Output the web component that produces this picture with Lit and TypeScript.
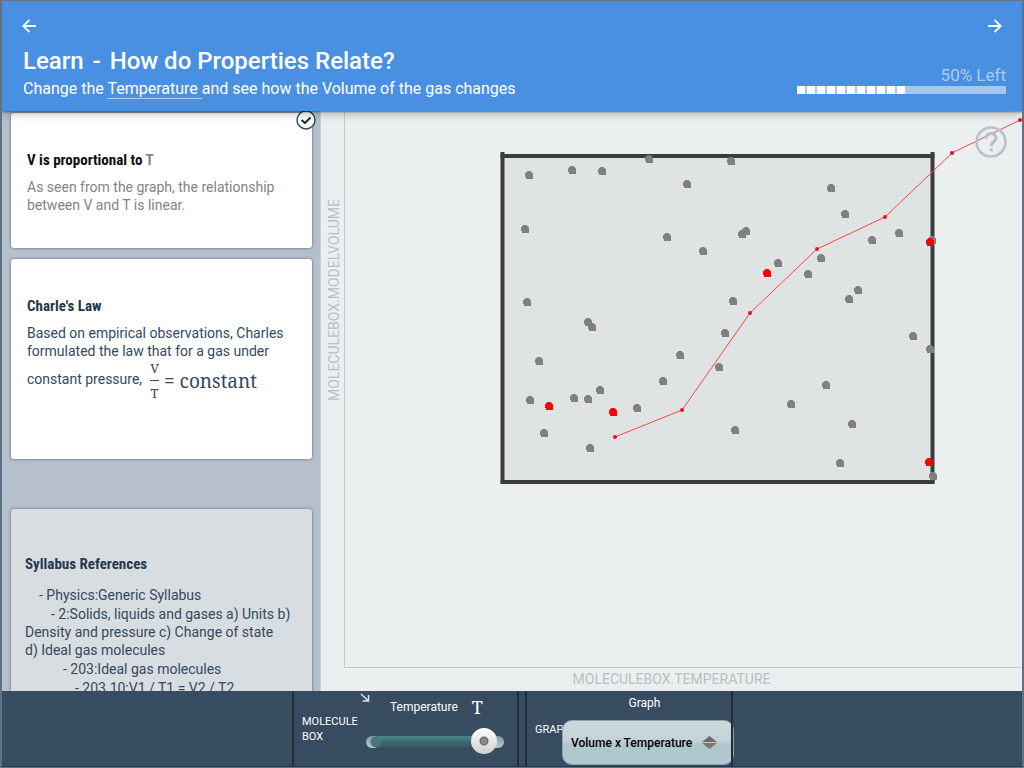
import { LitElement, html, css, svg } from "lit";
import { customElement, state } from "lit/decorators.js";

const MOLECULES: Array<[number, number]> = [
  [529, 175], [572, 170], [602, 171], [649, 159], [731, 161], [687, 184],
  [525, 229], [667, 237], [703, 251], [742, 234], [746, 231], [527, 302],
  [733, 301], [831, 188], [845, 214], [872, 240], [899, 233], [778, 263],
  [821, 258], [808, 274], [858, 290], [849, 299], [932, 240], [588, 322],
  [592, 327], [539, 361], [530, 400], [574, 398], [588, 399], [600, 390],
  [663, 381], [680, 355], [725, 333], [719, 367], [637, 408], [735, 430],
  [544, 433], [590, 448], [913, 336], [930, 349], [826, 385], [791, 404],
  [852, 424], [840, 463], [933, 476],
];

const TRACERS: Array<[number, number]> = [
  [930, 242], [767, 273], [549, 406], [613, 412], [929, 462],
];

const SERIES: Array<[number, number]> = [
  [615, 437], [682, 410], [750, 313], [817, 249], [885, 217], [952, 153], [1020, 120],
];

@customElement("app-header")
class AppHeader extends LitElement {
  static styles = css`
    :host {
      display: block;
      position: relative;
      z-index: 2;
      background: #4990e2;
      color: #fff;
      box-shadow: 0 1px 2px rgba(0, 0, 0, 0.45), 0 4px 8px rgba(0, 0, 0, 0.2);
    }
    .nav {
      display: flex;
      justify-content: space-between;
      padding: 15px 17px 0;
    }
    .arrow {
      display: block;
      width: 20px;
      height: 20px;
      padding: 0;
      border: 0;
      background: none;
      color: inherit;
    }
    .arrow svg {
      display: block;
    }
    .row {
      display: flex;
      justify-content: space-between;
      align-items: flex-end;
      padding: 10px 16px 11px 21px;
    }
    h1 {
      margin: 0;
      font-size: 24px;
      line-height: 30px;
      font-weight: 500;
    }
    .dash {
      margin: 0 3px;
    }
    p {
      margin: 0;
      font-size: 16px;
      line-height: 22px;
      padding-top: 2px;
    }
    .term {
      color: inherit;
      text-decoration: none;
      border-bottom: 1px solid #b6d2f3;
      white-space: pre;
    }
    .progress {
      width: 209px;
      padding-bottom: 6px;
      color: #a9cbf2;
    }
    .left {
      display: block;
      text-align: right;
      font-size: 17px;
      line-height: 22px;
    }
    .track {
      height: 8px;
      background: #a4c7f0;
    }
    .done {
      height: 8px;
      background: repeating-linear-gradient(90deg, #fff 0 8px, #a4c7f0 8px 10px);
    }
  `;
  render() {
    return html`
      <div class="nav">
        <button class="arrow" aria-label="Previous">
          <svg width="20" height="20" viewBox="0 0 20 20" fill="none" stroke="#fff" stroke-width="1.800">
            <path d="M17 10H4.500M10.500 3.800L4.300 10L10.500 16.200" />
          </svg>
        </button>
        <button class="arrow" aria-label="Next">
          <svg width="20" height="20" viewBox="0 0 20 20" fill="none" stroke="#fff" stroke-width="1.800">
            <path d="M3 10H15.500M9.500 3.800L15.700 10L9.500 16.200" />
          </svg>
        </button>
      </div>
      <div class="row">
        <div>
          <h1>Learn <span class="dash">-</span> How do Properties Relate?</h1>
          <p>Change the <a class="term" href="#temperature">Temperature </a>and see how the Volume of the gas changes</p>
        </div>
        <div class="progress">
          <span class="left">50% Left</span>
          <div class="track"><div class="done" style="width:52%"></div></div>
        </div>
      </div>
    `;
  }
}

@customElement("note-list")
class NoteList extends LitElement {
  static styles = css`
    :host {
      display: flex;
      flex-direction: column;
      gap: 11px;
      min-height: 0;
      overflow: hidden;
      padding: 2px 8px 0 9px;
      box-sizing: border-box;
      background: #b6c0cb;
      border-right: 1px solid #c9d1d8;
      color: #34495e;
    }
    .card {
      position: relative;
      flex: none;
      box-sizing: border-box;
      border-radius: 3px;
      padding: 37px 16px 34px;
      background: #fff;
      box-shadow: 0 0 3px rgba(40, 55, 75, 0.7);
    }
    .law {
      padding-bottom: 58px;
    }
    .refs {
      margin-top: 39px;
      padding: 45px 14px 30px;
      background: #d8dde1;
    }
    h2 {
      margin: 0;
      font-family: "Roboto Condensed", Roboto, sans-serif;
      font-size: 15px;
      line-height: 20px;
      font-weight: 700;
      color: #24384e;
    }
    .seen h2 {
      color: #0b0f18;
    }
    .seen .sym,
    .seen p {
      color: #7f8389;
    }
    p {
      margin: 0;
      font-size: 14px;
      line-height: 18px;
    }
    .seen p,
    .law p {
      padding-top: 8px;
    }
    .formula {
      display: inline-flex;
      align-items: center;
      gap: 5px;
      margin-left: 8px;
      vertical-align: middle;
      font-family: "Noto Serif", "DejaVu Serif", serif;
      font-size: 19px;
    }
    .frac {
      display: flex;
      flex-direction: column;
      text-align: center;
      font-size: 13px;
      line-height: 16px;
    }
    .frac span + span {
      border-top: 1px solid #34495e;
      padding-top: 4px;
    }
    .frac span:first-child {
      padding-bottom: 4px;
    }
    .check {
      position: absolute;
      top: -3px;
      right: -4px;
    }
    ul {
      list-style: none;
      margin: 0;
      padding: 12px 0 0;
      font-size: 14px;
      line-height: 18px;
    }
    li {
      padding-bottom: 1px;
    }
    .l1 { text-indent: 14px; }
    .l2 { text-indent: 26px; }
    .l3 { text-indent: 38px; }
    .l4 { text-indent: 50px; }
  `;
  render() {
    return html`
      <article class="card seen">
        <h2>V is proportional to <span class="sym">T</span></h2>
        <p>As seen from the graph, the relationship between V and T is linear.</p>
        <svg class="check" width="20" height="20" viewBox="0 0 20 20" aria-hidden="true">
          <circle cx="10" cy="10" r="9" fill="#fff" stroke="#2b4a50" stroke-width="1.4" />
          <path d="M5.5 10L9 13L14.5 7.5" fill="none" stroke="#1d3a40" stroke-width="2.2" />
        </svg>
      </article>
      <article class="card law">
        <h2>Charle's Law</h2>
        <p>
          Based on empirical observations, Charles formulated the law that for a gas under constant
          pressure,<span class="formula"
            ><span class="frac"><span>V</span><span>T</span></span><span>=</span><span>constant</span></span
          >
        </p>
      </article>
      <article class="card refs">
        <h2>Syllabus References</h2>
        <ul>
          <li class="l1">- Physics:Generic Syllabus</li>
          <li class="l2">- 2:Solids, liquids and gases a) Units b) Density and pressure c) Change of state d)&nbsp;Ideal gas molecules</li>
          <li class="l3">- 203:Ideal gas molecules</li>
          <li class="l4">- 203.10:V1 / T1 = V2 / T2</li>
        </ul>
      </article>
    `;
  }
}

@customElement("gas-model")
class GasModel extends LitElement {
  static styles = css`
    :host {
      display: grid;
      position: relative;
      grid-template-columns: 23px minmax(0, 1fr);
      grid-template-rows: minmax(0, 1fr) 23px;
      min-width: 0;
      min-height: 0;
      background: #ebeff0;
      color: #bcbfc1;
      font-size: 14px;
    }
    .y-label {
      writing-mode: vertical-rl;
      transform: rotate(180deg);
      text-align: right;
      line-height: 20px;
      padding-bottom: 88px;
      justify-self: end;
    }
    .plot {
      min-height: 0;
      border-left: 1px solid #c8cbcc;
      border-bottom: 1px solid #c8cbcc;
    }
    .plot svg {
      display: block;
      width: 100%;
      height: 100%;
    }
    .x-label {
      grid-column: 1 / -1;
      text-align: center;
      line-height: 23px;
    }
    .help {
      position: absolute;
      top: 15px;
      right: 15px;
      padding: 0;
      border: 0;
      background: none;
    }
    .help svg {
      display: block;
    }
  `;
  render() {
    const dot = (cx: number, cy: number, fill: string) =>
      svg`<path transform="translate(${cx} ${cy})" d="M-1.500 -4H1.500L4 -1.500V4H-3V2H-4V-1.500Z" fill=${fill} />`;
    return html`
      <span class="y-label">MOLECULEBOX.MODELVOLUME</span>
      <div class="plot">
        <svg viewBox="345 111 677 555" preserveAspectRatio="xMinYMin meet" role="img" aria-label="Gas molecules in a box with a volume and temperature graph">
          <rect x="503" y="156" width="429" height="326" fill="#dfe3e3" />
          <path d="M502.500 152V483M932.500 152V483" fill="none" stroke="#3c3c3d" stroke-width="4" />
          <path d="M500.500 156H934.500M500.500 482H934.500" fill="none" stroke="#3c3c3d" stroke-width="4" />
          ${MOLECULES.map(([x, y]) => dot(x, y, "#808080"))}
          ${TRACERS.map(([x, y]) => dot(x, y, "#ff0000"))}
          <polyline points=${SERIES.map((p) => p.join(",")).join(" ")} fill="none" stroke="#f44" stroke-width="1" />
          ${SERIES.map(([x, y]) => svg`<circle cx=${x} cy=${y} r="2" fill="#f01020" />`)}
        </svg>
      </div>
      <span class="x-label">MOLECULEBOX.TEMPERATURE</span>
      <button class="help" aria-label="Help">
        <svg width="32" height="32" viewBox="0 0 32 32" fill="none" stroke="#b7c1cb">
          <circle cx="16" cy="16" r="14.500" stroke-width="2.500" />
          <path d="M11 12.500C11 9.500 13.200 7.500 16 7.500S21 9.500 21 12.200C21 15.500 16.200 15.800 16.200 20.200" stroke-width="3" />
          <path d="M14.700 24H17.700" stroke-width="3" />
        </svg>
      </button>
    `;
  }
}

@customElement("control-bar")
class ControlBar extends LitElement {
  @state() private temperature = 94;

  static styles = css`
    :host {
      display: flex;
      gap: 6px;
      height: 76px;
      box-sizing: border-box;
      padding-left: 290px;
      background: #374b61;
      border-bottom: 1px solid #26384b;
      color: #fff;
      font-size: 12px;
    }
    .group {
      display: flex;
      position: relative;
      box-sizing: border-box;
      border: solid #222e34;
      border-width: 0 2px;
    }
    .gas {
      width: 227px;
      padding-left: 8px;
      gap: 4px;
    }
    .graph {
      width: 208px;
      padding-left: 8px;
    }
    .name {
      flex: none;
      width: 60px;
      padding-top: 23px;
      font-size: 11px;
      line-height: 15px;
    }
    .graph .name {
      width: 27px;
      padding-top: 31px;
    }
    .field {
      display: flex;
      flex-direction: column;
    }
    .caption {
      display: flex;
      align-items: center;
      gap: 14px;
      height: 31px;
      padding-left: 24px;
    }
    .symbol {
      font: 18px "Noto Serif", "DejaVu Serif", serif;
    }
    .corner {
      position: absolute;
      left: 65px;
      top: 1px;
    }
    .slider {
      appearance: none;
      width: 138px;
      height: 40px;
      margin: 0;
      background: none;
    }
    .slider::-webkit-slider-runnable-track {
      height: 12px;
      border-radius: 6px;
      background:
        radial-gradient(circle at 6px 6px, #47767f 0 5px, transparent 6px) 4px 0 / 12px 12px no-repeat,
        linear-gradient(#4d8792, #3c6469 55%, #35585a) 10px 0 / 110px 12px no-repeat,
        linear-gradient(#7f9da6, #b5cbd0);
    }
    .slider::-webkit-slider-thumb {
      appearance: none;
      width: 26px;
      height: 26px;
      margin-top: -8px;
      border-radius: 13px;
      background: radial-gradient(circle, #8a8a8a 0 3px, #6e6e6e 3px 4px, transparent 5px),
        linear-gradient(#fff, #cfcfcf);
    }
    .choice {
      display: flex;
      flex: none;
      flex-direction: column;
      position: relative;
      width: 172px;
    }
    .choice label {
      height: 24px;
      line-height: 24px;
      margin-bottom: 5px;
      padding-right: 7px;
      text-align: center;
    }
    select {
      appearance: none;
      width: 100%;
      height: 45px;
      padding: 0 8px;
      border: 1px solid #8fa3ab;
      border-radius: 10px;
      background: linear-gradient(#ccd8dc, #c4d3d8 45%, #afc6cd 55%, #b0c8ce);
      color: #000;
      font: 500 12px Roboto, sans-serif;
    }
    .divider {
      position: absolute;
      right: -2px;
      top: 0;
      bottom: 0;
      border-right: 2px solid #222e34;
      pointer-events: none;
    }
    .chevrons {
      position: absolute;
      right: 17px;
      bottom: 17px;
      pointer-events: none;
    }
  `;

  private onInput(e: Event) {
    this.temperature = Number((e.target as HTMLInputElement).value);
  }

  render() {
    return html`
      <section class="group gas">
        <span class="name">MOLECULE BOX</span>
        <svg class="corner" width="12" height="12" viewBox="0 0 12 12" fill="none" stroke="#dfe5e8" stroke-width="1.5" aria-hidden="true">
          <path d="M2 2L9 8.500M3.500 9H9.500V3" />
        </svg>
        <div class="field">
          <label class="caption" for="temp"><span>Temperature</span><span class="symbol">T</span></label>
          <input id="temp" class="slider" type="range" min="0" max="100" .value=${String(this.temperature)} @input=${this.onInput} />
        </div>
      </section>
      <section class="group graph">
        <span class="name">GRAPH</span>
        <div class="choice">
          <label for="graph">Graph</label>
          <select id="graph">
            <option>Volume x Temperature</option>
          </select>
          <svg class="chevrons" width="15" height="13" viewBox="0 0 15 13" aria-hidden="true">
            <path d="M7.500 0L15 6H0Z" fill="#6f6a6a" />
            <path d="M0 7H15L7.500 13Z" fill="#7c7777" />
          </svg>
        </div>
        <span class="divider"></span>
      </section>
    `;
  }
}

@customElement("app-root")
class AppRoot extends LitElement {
  static styles = css`
    :host {
      display: grid;
      box-sizing: border-box;
      height: 100vh;
      grid-template-rows: auto minmax(0, 1fr) auto;
      border: 1px solid #5d7388;
      border-width: 1px 2px;
      font-family: Roboto, sans-serif;
      overflow: hidden;
    }
    .body {
      display: grid;
      grid-template-columns: 319px minmax(0, 1fr);
      min-height: 0;
    }
  `;
  render() {
    return html`
      <app-header></app-header>
      <main class="body">
        <note-list></note-list>
        <gas-model></gas-model>
      </main>
      <control-bar></control-bar>
    `;
  }
}
